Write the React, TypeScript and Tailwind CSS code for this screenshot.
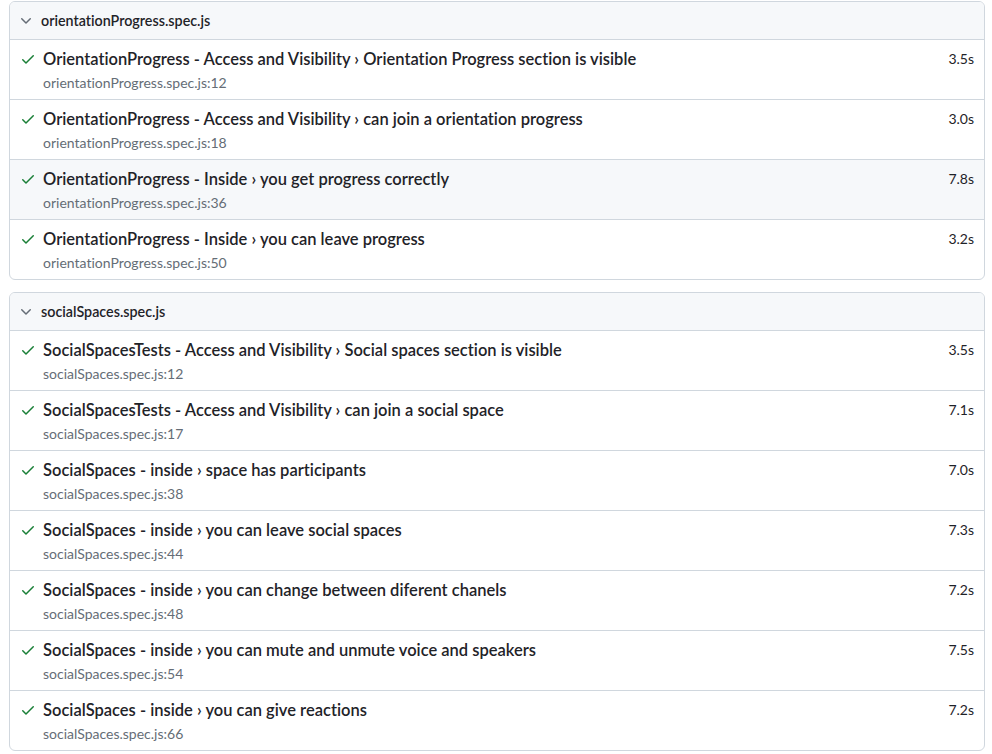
type Test = { title: string; file: string; line: number; duration: string; hover?: boolean };

const suites: { file: string; tests: Test[] }[] = [
  {
    file: "orientationProgress.spec.js",
    tests: [
      { title: "OrientationProgress - Access and Visibility › Orientation Progress section is visible", file: "orientationProgress.spec.js", line: 12, duration: "3.5s" },
      { title: "OrientationProgress - Access and Visibility › can join a orientation progress", file: "orientationProgress.spec.js", line: 18, duration: "3.0s" },
      { title: "OrientationProgress - Inside › you get progress correctly", file: "orientationProgress.spec.js", line: 36, duration: "7.8s", hover: true },
      { title: "OrientationProgress - Inside › you can leave progress", file: "orientationProgress.spec.js", line: 50, duration: "3.2s" },
    ],
  },
  {
    file: "socialSpaces.spec.js",
    tests: [
      { title: "SocialSpacesTests - Access and Visibility › Social spaces section is visible", file: "socialSpaces.spec.js", line: 12, duration: "3.5s" },
      { title: "SocialSpacesTests - Access and Visibility › can join a social space", file: "socialSpaces.spec.js", line: 17, duration: "7.1s" },
      { title: "SocialSpaces - inside › space has participants", file: "socialSpaces.spec.js", line: 38, duration: "7.0s" },
      { title: "SocialSpaces - inside › you can leave social spaces", file: "socialSpaces.spec.js", line: 44, duration: "7.3s" },
      { title: "SocialSpaces - inside › you can change between diferent chanels", file: "socialSpaces.spec.js", line: 48, duration: "7.2s" },
      { title: "SocialSpaces - inside › you can mute and unmute voice and speakers", file: "socialSpaces.spec.js", line: 54, duration: "7.5s" },
      { title: "SocialSpaces - inside › you can give reactions", file: "socialSpaces.spec.js", line: 66, duration: "7.2s" },
    ],
  },
];

function Check() {
  return (
    <svg viewBox="0 0 16 16" width="16" height="16" className="fill-[#1a7f37] shrink-0">
      <path d="M13.78 4.22a.75.75 0 0 1 0 1.06l-7.25 7.25a.75.75 0 0 1-1.06 0L2.22 9.28a.751.751 0 0 1 .018-1.042.751.751 0 0 1 1.042-.018L6 10.94l6.72-6.72a.75.75 0 0 1 1.06 0Z" />
    </svg>
  );
}

function Chevron() {
  return (
    <svg viewBox="0 0 16 16" width="16" height="16" className="fill-[#656d76] shrink-0">
      <path d="M12.78 5.22a.749.749 0 0 1 0 1.06l-4.25 4.25a.749.749 0 0 1-1.06 0L3.22 6.28a.749.749 0 1 1 1.06-1.06L8 8.939l3.72-3.719a.749.749 0 0 1 1.06 0Z" />
    </svg>
  );
}

export default function App() {
  return (
    <div className="bg-white min-h-screen pt-px text-[#1f2328] [font-variant-ligatures:none]" style={{ fontFamily: 'Lato, "Noto Sans", sans-serif' }}>
      {suites.map((s, i) => (
        <div key={s.file} className={`ml-[9px] mr-[7px] border border-[#d0d7de] rounded-md overflow-hidden ${i > 0 ? "mt-3" : ""}`}>
          {/* suite header */}
          <div className="h-[38px] flex items-center gap-[7px] pl-2 bg-[#f6f8fa] border-b border-[#d0d7de]">
            <Chevron />
            <span className="text-[14.3px] font-semibold">{s.file}</span>
          </div>
          {s.tests.map((t, j) => (
            <div
              key={t.line}
              className={`flex pl-[10px] pr-[10px] pt-[7px] pb-[6px] ${j < s.tests.length - 1 ? "border-b border-[#d0d7de]" : ""} ${t.hover ? "bg-[#f6f8fa]" : ""}`}
            >
              <div className="flex-1 min-w-0">
                <div className="flex items-center gap-[7px] leading-6">
                  <Check />
                  <span className="text-[16.5px] font-semibold">{t.title}</span>
                </div>
                <div className="mt-[2px] ml-[23px] text-sm leading-5 text-[#656d76]">
                  {t.file}:{t.line}
                </div>
              </div>
              <div className="text-sm leading-6 text-[#1f2328]">{t.duration}</div>
            </div>
          ))}
        </div>
      ))}
    </div>
  );
}
